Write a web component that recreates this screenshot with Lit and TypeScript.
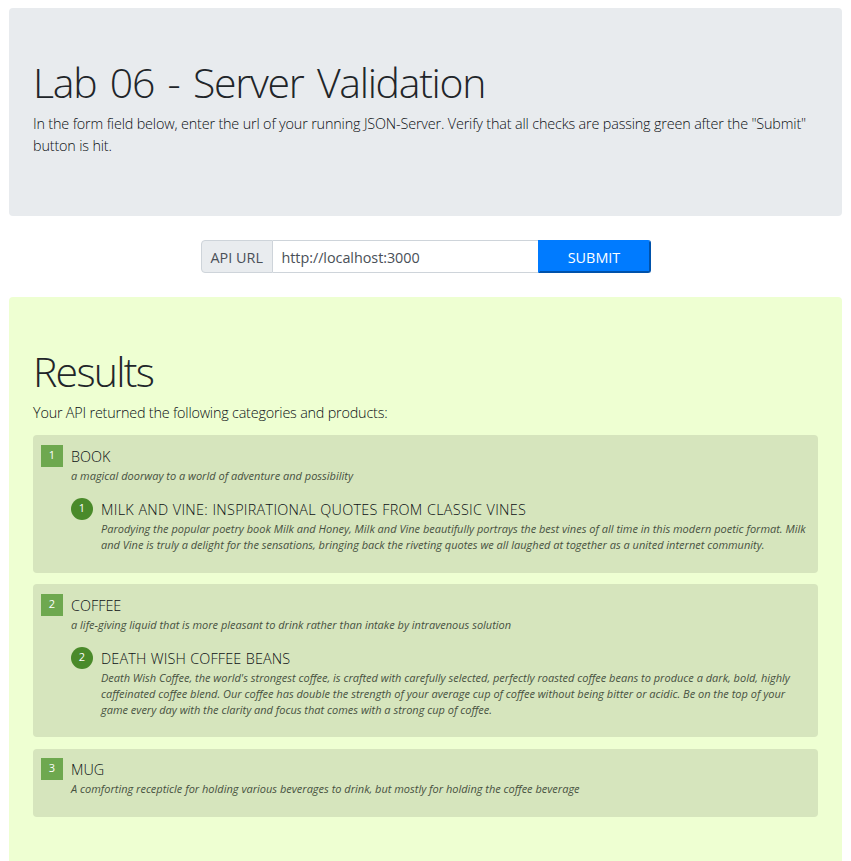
import { LitElement, html, css } from "lit";
import { customElement } from "lit/decorators.js";

interface Product { id: number; name: string; tracking: number; lines: string[]; }
interface Category { id: number; name: string; description: string; products: Product[]; }

const categories: Category[] = [
  {
    id: 1, name: "Book", description: "a magical doorway to a world of adventure and possibility",
    products: [{
      id: 1, name: "Milk and Vine: Inspirational Quotes From Classic Vines", tracking: 0.29,
      lines: [
        "Parodying the popular poetry book Milk and Honey, Milk and Vine beautifully portrays the best vines of all time in this modern poetic format. Milk",
        "and Vine is truly a delight for the sensations, bringing back the riveting quotes we all laughed at together as a united internet community.",
      ],
    }],
  },
  {
    id: 2, name: "Coffee", description: "a life-giving liquid that is more pleasant to drink rather than intake by intravenous solution",
    products: [{
      id: 2, name: "Death Wish Coffee Beans", tracking: 0.15,
      lines: [
        "Death Wish Coffee, the world's strongest coffee, is crafted with carefully selected, perfectly roasted coffee beans to produce a dark, bold, highly",
        "caffeinated coffee blend. Our coffee has double the strength of your average cup of coffee without being bitter or acidic. Be on the top of your",
        "game every day with the clarity and focus that comes with a strong cup of coffee.",
      ],
    }],
  },
  { id: 3, name: "Mug", description: "A comforting recepticle for holding various beverages to drink, but mostly for holding the coffee beverage", products: [] },
];

@customElement("app-root")
export class AppRoot extends LitElement {
  static styles = css`
    :host { display: block; height: 861px; overflow: hidden; box-sizing: border-box; padding: 8px 9px 0; background: #fff;
      font-family: "Open Sans", "Noto Sans", sans-serif; color: #0c1014; font-size: 14.4px; font-weight: 300; }
    * { box-sizing: border-box; }
    h1, p { margin: 0; font-weight: 300; white-space: nowrap; }
    h1 { font-size: 41px; line-height: 52px; height: 57px; letter-spacing: -1.3px; word-spacing: 4.2px; color: #212529; }
    .panel { padding: 48px 24px; border-radius: 4px; background: #e8ebee; height: 208px; }
    .lead { line-height: 22px; letter-spacing: -0.165px; }
    .results h1 { letter-spacing: -1.75px; }
    .results .lead { letter-spacing: -0.2px; }
    .form { display: flex; width: 450px; height: 33px; margin: 24px auto; font-weight: 400; }
    .label { width: 72px; border: 1px solid #ced4da; border-radius: 4px 0 0 4px; background: #e9ecef; color: #495057; line-height: 33px; padding-left: 9px; white-space: nowrap; }
    .url { width: 265px; border: 1px solid #ced4da; border-width: 1px 0; color: #495057; font: inherit; letter-spacing: -0.05px; padding: 2px 9px 0; border-radius: 0; outline: none; }
    .submit { width: 113px; border: 2px outset #007bff; border-radius: 0 3px 3px 0; background: #007bff; color: #fff; font: inherit; text-transform: uppercase; padding: 2px 0 0; }
    .results { background: #eeffd2; height: 600px; }
    .cards { display: flex; flex-direction: column; gap: 11.7px; padding-top: 11.4px; }
    .card { background: #d6e5bd; border-radius: 4px; padding: 9.6px 8px 19.8px; }
    .row { display: grid; grid-template-columns: 22px 1fr; column-gap: 8px; }
    .badge { width: 22px; height: 22px; background: #6ea84f; color: #fff; font-size: 11px; font-weight: 400; line-height: 20px; text-align: center; }
    .round { background: #4a8a2a; border-radius: 50%; }
    .name { line-height: 24px; margin-bottom: -1px; text-transform: uppercase; }
    .product .name { word-spacing: 0.4px; }
    .desc { font-style: italic; font-size: 11px; line-height: 15.9px; font-weight: 400; color: #47513f; }
    .product { margin-top: 14px; }
  `;

  render() {
    return html`
      <section class="panel">
        <h1>Lab 06 - Server Validation</h1>
        <p class="lead">In the form field below, enter the url of your running JSON-Server. Verify that all checks are passing green after the "Submit"<br />button is hit.</p>
      </section>
      <form class="form">
        <span class="label">API URL</span>
        <input class="url" .value=${"http://localhost:3000"} />
        <button class="submit" type="button">Submit</button>
      </form>
      <section class="panel results">
        <h1>Results</h1>
        <p class="lead">Your API returned the following categories and products:</p>
        <div class="cards">${categories.map((c) => html`
          <article class="card row">
            <span class="badge">${c.id}</span>
            <div>
              <p class="name">${c.name}</p>
              <p class="desc">${c.description}</p>
              ${c.products.map((p) => html`
                <div class="row product">
                  <span class="badge round">${p.id}</span>
                  <div>
                    <p class="name" style="letter-spacing: ${p.tracking}px">${p.name}</p>
                    ${p.lines.map((l) => html`<p class="desc">${l}</p>`)}
                  </div>
                </div>`)}
            </div>
          </article>`)}
        </div>
      </section>`;
  }
}
